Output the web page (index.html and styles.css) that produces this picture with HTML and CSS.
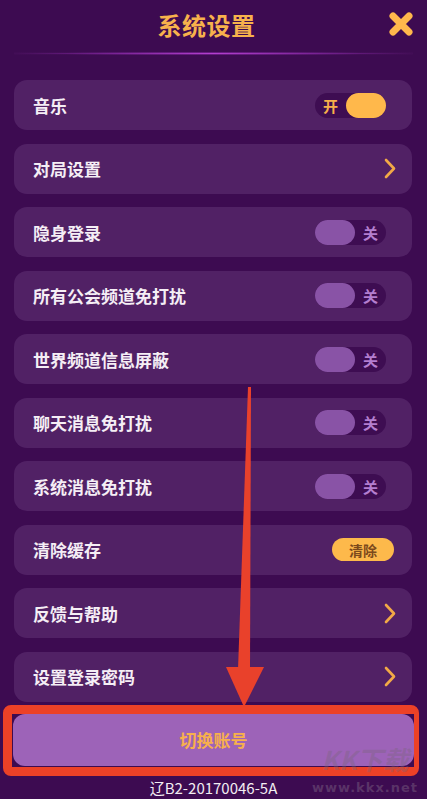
FILE: index.html
```html
<!DOCTYPE html>
<html lang="zh">
<head>
  <meta charset="UTF-8" />
  <meta name="viewport" content="width=device-width, initial-scale=1.0"/>
  <title>系统设置</title>
  <link rel="stylesheet" href="styles.css">
</head>
<body>
  <div class="header">
    <span></span>
    <h1>系统设置</h1>
    <div class="close">
      <svg width="24" height="24" viewBox="0 0 24 24"><path d="M4 4 L20 20 M20 4 L4 20" stroke="#ffb84c" stroke-width="7" stroke-linecap="round"/></svg>
    </div>
  </div>
  <div class="glow"></div>

  <div class="list">
    <div class="row">
      <span class="label">音乐</span>
      <div class="toggle on"><span class="state">开</span><span class="knob"></span></div>
    </div>
    <div class="row">
      <span class="label">对局设置</span>
      <svg class="chevron" width="12" height="21" viewBox="0 0 12 21"><path d="M2 2 L10 10.5 L2 19" fill="none" stroke="#f2a946" stroke-width="2.6" stroke-linecap="round" stroke-linejoin="round"/></svg>
    </div>
    <div class="row">
      <span class="label">隐身登录</span>
      <div class="toggle off"><span class="knob"></span><span class="state">关</span></div>
    </div>
    <div class="row">
      <span class="label">所有公会频道免打扰</span>
      <div class="toggle off"><span class="knob"></span><span class="state">关</span></div>
    </div>
    <div class="row">
      <span class="label">世界频道信息屏蔽</span>
      <div class="toggle off"><span class="knob"></span><span class="state">关</span></div>
    </div>
    <div class="row">
      <span class="label">聊天消息免打扰</span>
      <div class="toggle off"><span class="knob"></span><span class="state">关</span></div>
    </div>
    <div class="row">
      <span class="label">系统消息免打扰</span>
      <div class="toggle off"><span class="knob"></span><span class="state">关</span></div>
    </div>
    <div class="row">
      <span class="label">清除缓存</span>
      <button class="clear">清除</button>
    </div>
    <div class="row">
      <span class="label">反馈与帮助</span>
      <svg class="chevron" width="12" height="21" viewBox="0 0 12 21"><path d="M2 2 L10 10.5 L2 19" fill="none" stroke="#f2a946" stroke-width="2.6" stroke-linecap="round" stroke-linejoin="round"/></svg>
    </div>
    <div class="row">
      <span class="label">设置登录密码</span>
      <svg class="chevron" width="12" height="21" viewBox="0 0 12 21"><path d="M2 2 L10 10.5 L2 19" fill="none" stroke="#f2a946" stroke-width="2.6" stroke-linecap="round" stroke-linejoin="round"/></svg>
    </div>
  </div>

  <div class="highlight">
    <button class="switch">切换账号</button>
  </div>

  <div class="footer"><span>辽B2-20170046-5A</span></div>

  <!-- annotation arrow drawn over the list -->
  <svg class="arrow" width="60" height="330" viewBox="220 383 60 330">
    <polygon points="248,387 251,387 250,670 238,670" fill="#e9412b"/>
    <polygon points="226,667 264,667 244,707" fill="#e9412b"/>
  </svg>

  <div class="watermark">
    <span class="wm-big">KK下载</span>
    <span class="wm-url">www.kkx.net</span>
  </div>
</body>
</html>
```

FILE: styles.css
```css
* {
  box-sizing: border-box;
}
body {
  margin: 0;
  width: 427px;
  height: 799px;
  overflow: hidden;
  position: relative;
  background: #3d0b51;
  font-family: "Noto Sans CJK SC", "Noto Sans", sans-serif;
}
.header {
  display: grid;
  grid-template-columns: 1fr auto 1fr;
  align-items: center;
  height: 48px;
  padding: 0 14px 0 0;
}
.header h1 {
  margin: 0;
  font-size: 24px;
  font-weight: 700;
  color: #f7b24c;
  letter-spacing: 0.5px;
}
.close {
  justify-self: end;
  display: flex;
}
.glow {
  height: 3px;
  margin: 4px 14px 0;
  background: radial-gradient(ellipse at center, #b43fd0 0%, #7a2396 35%, rgba(80, 20, 100, 0.3) 70%, rgba(61, 11, 81, 0) 100%);
}
.list {
  display: flex;
  flex-direction: column;
  gap: 13.5px;
  padding: 25px 15px 0 14px;
}
.row {
  height: 50px;
  background: #512165;
  border-radius: 13px;
  display: flex;
  align-items: center;
  justify-content: space-between;
  padding: 0 16px 0 19px;
}
.label {
  color: #f5eef5;
  font-size: 17px;
  font-weight: 700;
}
.toggle {
  width: 71px;
  height: 25px;
  border-radius: 13px;
  background: #3e0d52;
  display: flex;
  align-items: center;
  margin-right: 10px;
}
.toggle .knob {
  width: 40px;
  height: 25px;
  border-radius: 13px;
}
.toggle .state {
  flex: 1;
  text-align: center;
  font-size: 15px;
  font-weight: 700;
}
.toggle.on .knob {
  background: #ffb84b;
}
.toggle.on .state {
  color: #f7b04a;
}
.toggle.off .knob {
  background: #8953a6;
}
.toggle.off .state {
  color: #b47ed0;
}
.clear {
  width: 62px;
  height: 23px;
  border: none;
  border-radius: 12px;
  background: #fdb94b;
  color: #7c4a1c;
  font-family: inherit;
  font-size: 14px;
  font-weight: 700;
  padding: 0;
  margin-right: 2px;
}
.highlight {
  margin: 3px 8px 0 3px;
  height: 71px;
  border: 9px solid #ec4127;
  border-right-width: 5px;
  border-radius: 8px;
  background: #3d0b51;
  padding: 0 0 1px 1px;
  display: flex;
}
.switch {
  flex: 1;
  border: none;
  border-radius: 12px;
  background: #9d63b8;
  color: #f7b04c;
  font-family: inherit;
  font-size: 17px;
  font-weight: 700;
}
.footer {
  display: flex;
  justify-content: center;
  color: #f2edf2;
  font-size: 15px;
  line-height: 20px;
  margin-top: 2px;
}
.arrow {
  position: absolute;
  left: 220px;
  top: 383px;
}
.watermark {
  position: absolute;
  left: 310px;
  top: 744px;
  width: 110px;
  display: flex;
  flex-direction: column;
  align-items: center;
  pointer-events: none;
}
.wm-big {
  font-size: 26px;
  font-weight: 700;
  font-style: italic;
  color: rgba(120, 100, 120, 0.35);
  line-height: 30px;
}
.wm-url {
  font-size: 13px;
  font-weight: 700;
  font-family: "DejaVu Sans", sans-serif;
  color: rgba(110, 80, 120, 0.6);
  letter-spacing: 1px;
  line-height: 15px;
  margin-top: 6px;
}
```
